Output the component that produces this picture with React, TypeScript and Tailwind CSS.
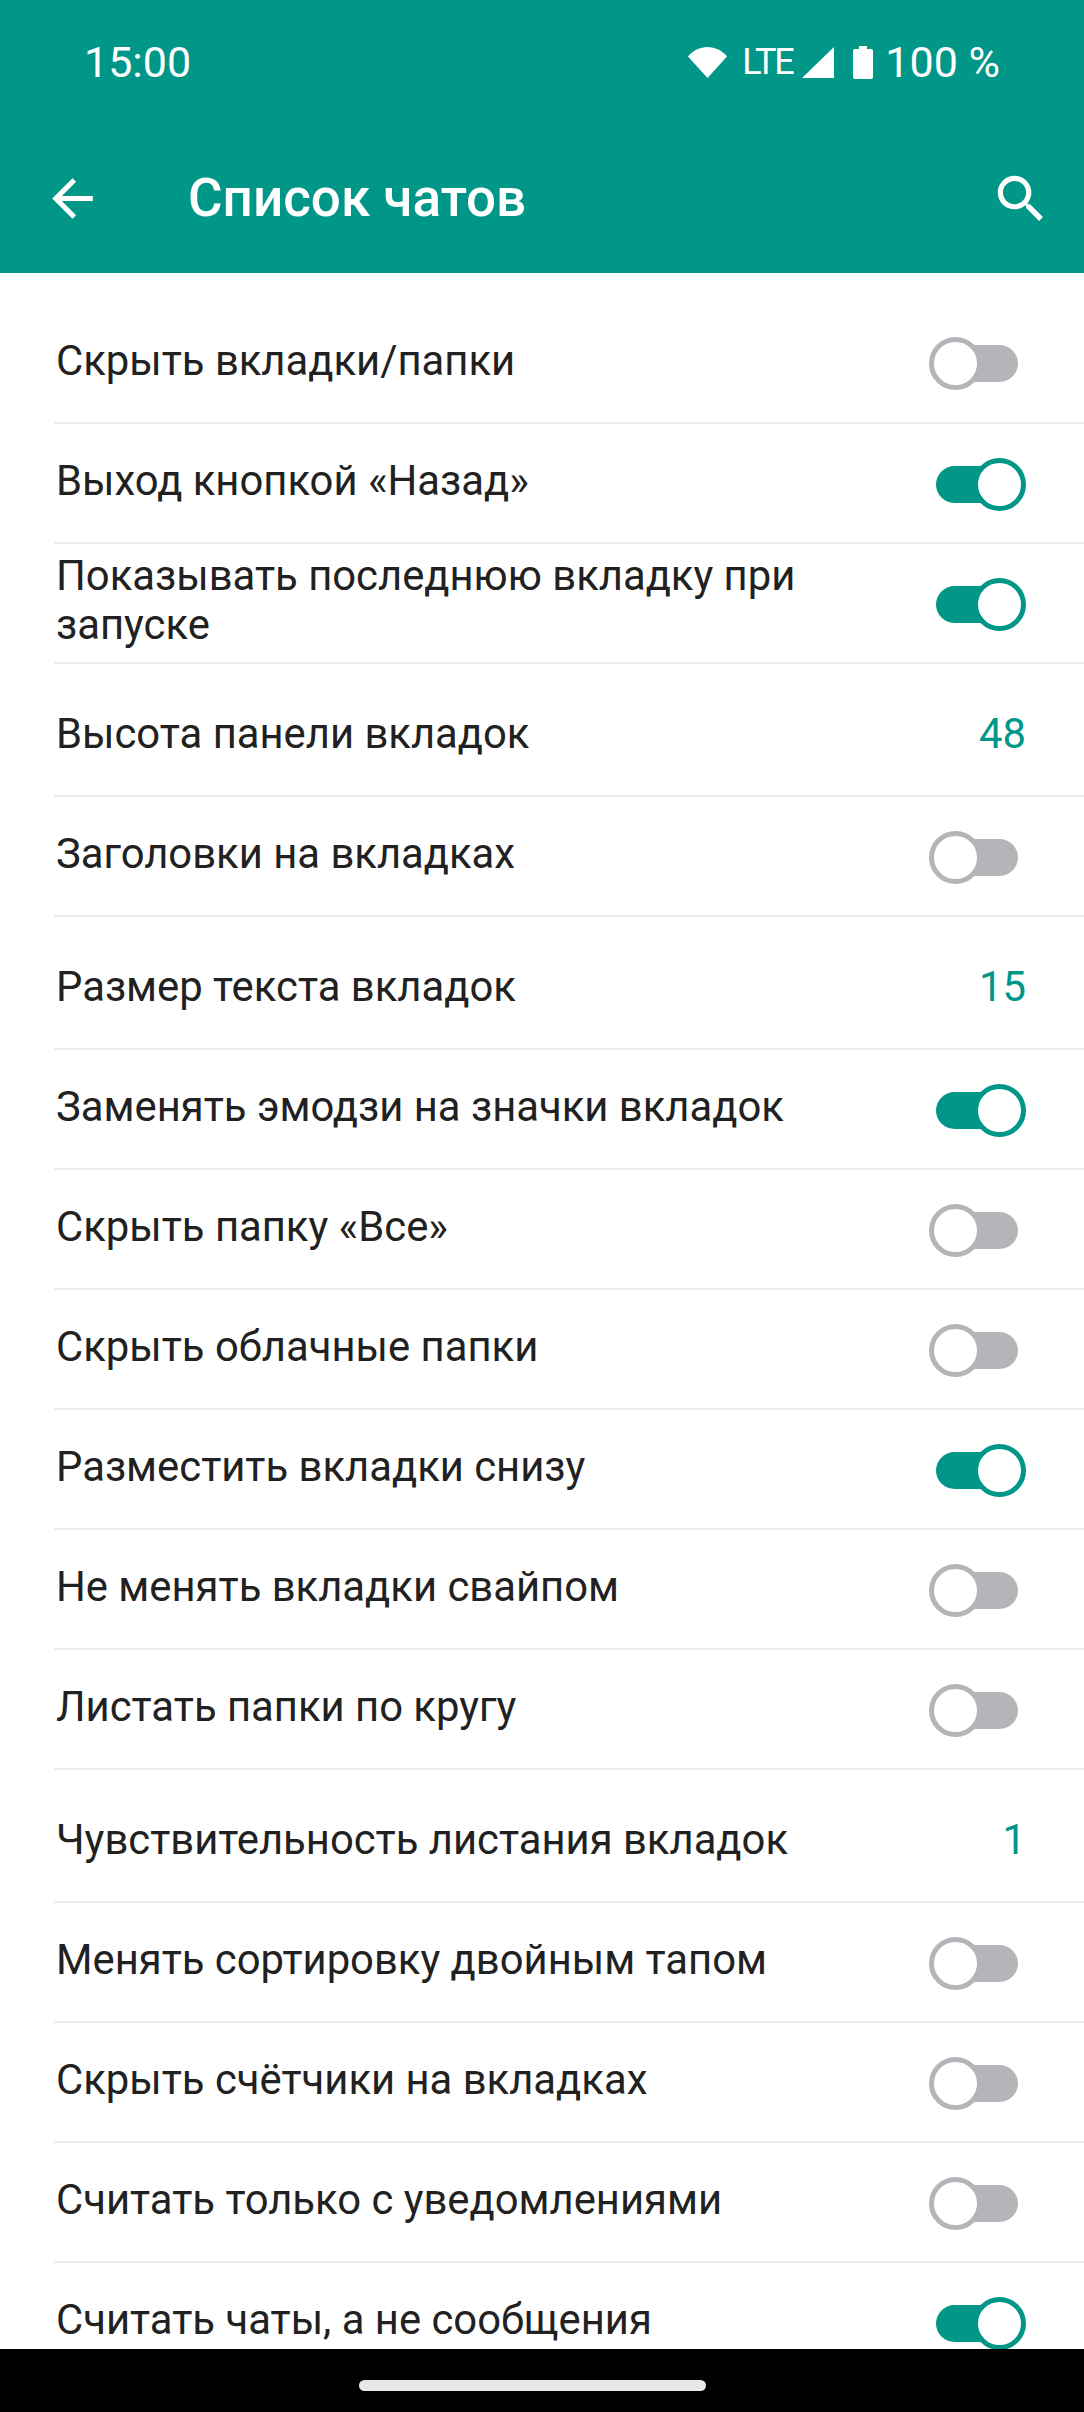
const font = { fontFamily: "Roboto, sans-serif" };

type Row =
  | { label: string; on: boolean }
  | { label: string; value: string };

const rows: Row[] = [
  { label: "Выход кнопкой «Назад»", on: true },
  { label: "Показывать последнюю вкладку при запуске", on: true },
  { label: "Высота панели вкладок", value: "48" },
  { label: "Заголовки на вкладках", on: false },
  { label: "Размер текста вкладок", value: "15" },
  { label: "Заменять эмодзи на значки вкладок", on: true },
  { label: "Скрыть папку «Все»", on: false },
  { label: "Скрыть облачные папки", on: false },
  { label: "Разместить вкладки снизу", on: true },
  { label: "Не менять вкладки свайпом", on: false },
  { label: "Листать папки по кругу", on: false },
  { label: "Чувствительность листания вкладок", value: "1" },
  { label: "Менять сортировку двойным тапом", on: false },
  { label: "Скрыть счётчики на вкладках", on: false },
  { label: "Считать только с уведомлениями", on: false },
  { label: "Считать чаты, а не сообщения", on: true },
];

const Toggle = ({ on }: { on: boolean }) => (
  <div className="relative w-[82px] h-[37px] mt-[3px] shrink-0">
    <div className={`w-full h-full rounded-full ${on ? "bg-[#009688]" : "bg-[#b3b5b9]"}`} />
    <div
      className={`absolute top-[-8px] w-[53px] h-[53px] rounded-full bg-white border-[5px] ${
        on ? "right-[-8px] border-[#009688]" : "left-[-7px] border-[#b3b5b9]"
      }`}
    />
  </div>
);

const SettingRow = ({ row }: { row: Row }) => {
  const isValue = "value" in row;
  return (
    <div
      className={`flex items-center justify-between shrink-0 ml-[54px] pr-[66px] border-b-2 border-[#ececec] ${
        isValue ? "h-[133px]" : "h-[120px]"
      }`}
    >
      <span
        className={`text-[41.8px] leading-[49px] text-[#212121] pl-[2px] max-w-[800px] ${
          isValue ? "pt-[7px]" : "pb-[6px]"
        }`}
      >
        {row.label}
      </span>
      {isValue ? (
        <span className="text-[41.8px] leading-[49px] text-[#009688] mr-[-8px] pt-[7px]">{row.value}</span>
      ) : (
        <Toggle on={row.on} />
      )}
    </div>
  );
};

export default function App() {
  return (
    <div className="w-[1084px] h-[2412px] flex flex-col overflow-hidden bg-white" style={font}>
      <header className="bg-[#009688] h-[273px] shrink-0 text-white">
        <div className="h-[124px] flex items-center justify-between pl-[84px] pr-[84px]">
          <span className="text-[43px] leading-none">15:00</span>
          <div className="flex items-center">
            <svg width="39" height="31" viewBox="0 0 39 31" fill="white">
              <path d="M0 9.5C5 3.5 12 0 19.5 0S34 3.5 39 9.5L19.5 31Z" />
            </svg>
            <span className="text-[36px] leading-none ml-[15px] tracking-[-2px] w-[50px]">LTE</span>
            <svg width="32" height="31" viewBox="0 0 32 31" fill="white" className="ml-[10px]">
              <path d="M32 0V31H0Z" />
            </svg>
            <svg width="20" height="33" viewBox="0 0 20 33" fill="white" className="ml-[19px]">
              <path d="M6 0H14V3H18A2 2 0 0 1 20 5V31A2 2 0 0 1 18 33H2A2 2 0 0 1 0 31V5A2 2 0 0 1 2 3H6Z" />
            </svg>
            <span className="text-[43px] leading-none ml-[12px]">100 %</span>
          </div>
        </div>
        <div className="h-[149px] flex items-center justify-between pl-[42px] pr-[32px]">
          <div className="flex items-center">
            <svg width="61" height="61" viewBox="0 0 24 24" fill="white">
              <path d="M20 11H7.83l5.59-5.59L12 4l-8 8 8 8 1.41-1.41L7.83 13H20v-2z" />
            </svg>
            <span className="text-[53px] leading-none font-medium ml-[85px]">Список чатов</span>
          </div>
          <svg width="62" height="62" viewBox="0 0 24 24" fill="white">
            <path d="M15.5 14h-.79l-.28-.27A6.471 6.471 0 0 0 16 9.5 6.5 6.5 0 1 0 9.5 16c1.61 0 3.09-.59 4.23-1.57l.27.28v.79l5 4.99L20.49 19l-4.99-5zm-6 0C7.01 14 5 11.99 5 9.5S7.01 5 9.5 5 14 7.01 14 9.5 11.99 14 9.5 14z" />
          </svg>
        </div>
      </header>

      <main className="flex-1 min-h-0 overflow-hidden flex flex-col">
        <div className="flex items-center justify-between shrink-0 ml-[54px] pr-[66px] h-[151px] pt-[28px] border-b-2 border-[#ececec]">
          <span className="text-[41.8px] leading-[49px] text-[#212121] pl-[2px] pb-[3px]">Скрыть вкладки/папки</span>
          <Toggle on={false} />
        </div>
        {rows.map((row) => (
          <SettingRow key={row.label} row={row} />
        ))}
      </main>

      <nav className="bg-black h-[63px] shrink-0 flex justify-center pt-[31px] pr-[20px]">
        <div className="w-[347px] h-[11px] rounded-full bg-[#e8e8e8]" />
      </nav>
    </div>
  );
}
